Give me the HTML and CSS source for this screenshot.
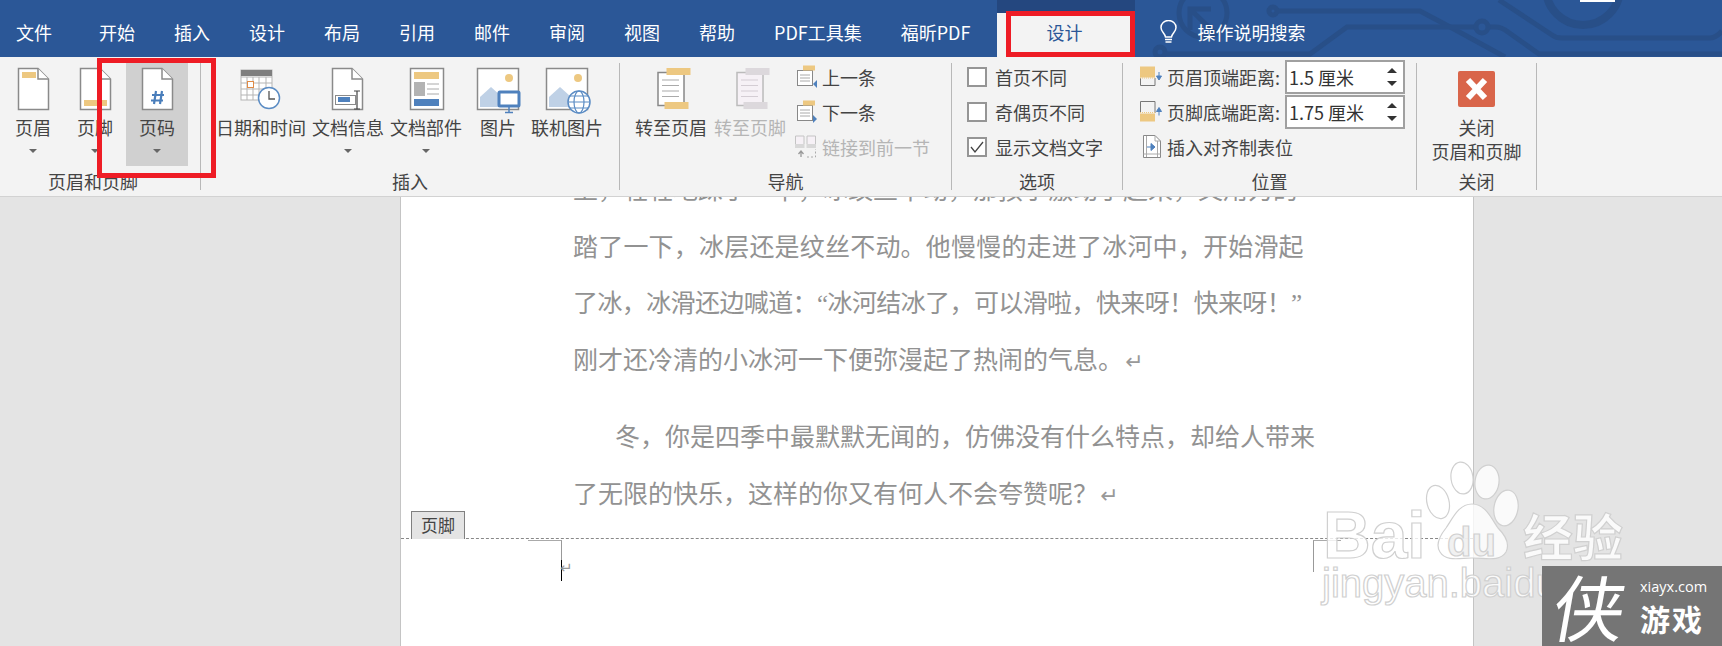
FILE: index.html
```html
<!DOCTYPE html>
<html lang="zh-CN">
  <head>
    <meta charset="UTF-8" />
    <title>页眉和页脚工具</title>
    <link rel="stylesheet" href="styles.css">
  </head>
  <body>
    <svg class="defs" width="0" height="0">
      <symbol id="doc" viewBox="0 0 48 48">
        <path d="M9.5 3.5H29L39.5 14V44.5H9.5Z" fill="#fff" stroke="#8a8a8a" stroke-width="1.5" />
        <path d="M29 3.5V14H39.5" fill="#fff" stroke="#8a8a8a" stroke-width="1.5" />
      </symbol>
    </svg>

    <!-- title tabs -->
    <div class="tabs">
      <svg class="circuit" width="1722" height="57" viewBox="0 0 1722 57">
        <g fill="none" stroke="#284f88" stroke-width="5">
          <circle cx="1203" cy="13" r="24" />
          <path d="M1190 30V9H1211M1191 10L1216 34" />
          <circle cx="1273" cy="11" r="4" />
          <path d="M1278 11H1420L1452 28L1505 57" />
          <circle cx="1160" cy="52" r="5" />
          <path d="M1165 54H1310L1347 27H1476M1488 27H1495Q1502 27 1508 32L1539 54H1722" />
          <circle cx="1482" cy="27" r="6" />
          <path d="M1499 0L1552 35Q1556 38 1562 38H1710Q1716 38 1722 31" />
          <circle cx="1583" cy="-12" r="37" stroke-width="8" />
        </g>
        <rect x="1580" y="0" width="35" height="2" fill="#fff" />
      </svg>
      <span class="tab tab-file">文件</span>
      <span class="tab">开始</span>
      <span class="tab">插入</span>
      <span class="tab">设计</span>
      <span class="tab">布局</span>
      <span class="tab">引用</span>
      <span class="tab">邮件</span>
      <span class="tab">审阅</span>
      <span class="tab">视图</span>
      <span class="tab">帮助</span>
      <span class="tab">PDF工具集</span>
      <span class="tab tab-fx">福昕PDF</span>
      <div class="tab-tool">
        <div class="tab-tool-strip"></div>
        <div class="tab-tool-name">设计</div>
      </div>
      <div class="tell-me">
        <svg width="17" height="24" viewBox="0 0 17 24">
          <path d="M5.5 17C5 13 1 12 1 7.5A7.5 7 0 0 1 16 7.5C16 12 12 13 11.5 17Z" fill="none" stroke="#fff" stroke-width="1.5" />
          <path d="M5 19.5H12M5.5 22H11.5" stroke="#fff" stroke-width="1.5" />
        </svg>
        <span>操作说明搜索</span>
      </div>
    </div>

    <!-- ribbon -->
    <div class="ribbon">
      <section class="group group-hf">
        <div class="group-body">
          <div class="btn btn-fixed">
            <svg class="icon" viewBox="0 0 48 48"><use href="#doc" /><rect x="13" y="7" width="14" height="6" fill="#edc881" /></svg>
            <span class="label">页眉</span><i class="caret"></i>
          </div>
          <div class="btn btn-fixed">
            <svg class="icon" viewBox="0 0 48 48"><use href="#doc" /><rect x="13" y="35" width="23" height="6" fill="#edc881" /></svg>
            <span class="label">页脚</span><i class="caret"></i>
          </div>
          <div class="btn btn-fixed btn-on">
            <svg class="icon" viewBox="0 0 48 48"><use href="#doc" /><path d="M23 26L21 39M29 26L27 39M19 30H31M18 35.5H30" fill="none" stroke="#4a7ebb" stroke-width="2.2" /></svg>
            <span class="label">页码</span><i class="caret"></i>
          </div>
        </div>
        <div class="group-label">页眉和页脚</div>
      </section>

      <section class="group group-insert">
        <div class="group-body">
          <div class="btn">
            <svg class="icon" viewBox="0 0 48 48">
              <rect x="4" y="5" width="31" height="30" fill="#fff" stroke="#b5b5b5" />
              <path d="M4 12H35M4 18H35M4 24H35M4 30H35M10 12V35M16 12V35M22 12V35M29 12V35" stroke="#b5b5b5" />
              <rect x="4" y="5" width="31" height="6" fill="#7f7f7f" />
              <rect x="10.5" y="16.5" width="6" height="6" fill="#fff" stroke="#e08a45" />
              <circle cx="32" cy="33" r="10.5" fill="#fff" stroke="#5b8cc4" stroke-width="1.5" />
              <path d="M32 26V34H38" fill="none" stroke="#555" stroke-width="1.3" />
            </svg>
            <span class="label">日期和时间</span>
          </div>
          <div class="btn">
            <svg class="icon" viewBox="0 0 48 48">
              <path d="M8.5 3.5H28L38.5 14V44.5H8.5Z" fill="#fff" stroke="#8a8a8a" stroke-width="1.5" />
              <path d="M28 3.5V14H38.5" fill="#fff" stroke="#8a8a8a" stroke-width="1.5" />
              <rect x="11.5" y="30.5" width="20" height="9" fill="#fff" stroke="#8a8a8a" />
              <rect x="14" y="32" width="12" height="5" fill="#4f81bd" />
              <path d="M30 26H33V44H30M36 26H33M36 44H33" fill="none" stroke="#444" stroke-width="1.2" />
            </svg>
            <span class="label">文档信息</span><i class="caret"></i>
          </div>
          <div class="btn">
            <svg class="icon" viewBox="0 0 48 48">
              <rect x="8.5" y="3.5" width="33" height="41" fill="#fff" stroke="#8a8a8a" stroke-width="1.5" />
              <rect x="12" y="7" width="25" height="7" fill="#edc881" />
              <rect x="12" y="17" width="11" height="14" fill="#b3b3b3" />
              <path d="M25 19H37M25 24H37M25 29H37" stroke="#aaa" />
              <rect x="12" y="34" width="25" height="7" fill="#4f81bd" />
            </svg>
            <span class="label">文档部件</span><i class="caret"></i>
          </div>
          <div class="btn btn-pic">
            <svg class="icon" viewBox="0 0 48 48">
              <rect x="3.5" y="3.5" width="41" height="41" fill="#fff" stroke="#8a8a8a" stroke-width="1.5" />
              <circle cx="35" cy="13" r="4" fill="#edc881" />
              <path d="M6 42V32L17 22L27 31V42Z" fill="#bfd1e6" />
              <rect x="25" y="27" width="20" height="14" rx="1" fill="#fff" stroke="#4f81bd" stroke-width="3" />
              <path d="M35 42V47M31 47.5H39" stroke="#4f81bd" stroke-width="1.5" />
            </svg>
            <span class="label">图片</span>
          </div>
          <div class="btn btn-online">
            <svg class="icon" viewBox="0 0 48 48">
              <rect x="3.5" y="3.5" width="41" height="41" fill="#fff" stroke="#8a8a8a" stroke-width="1.5" />
              <circle cx="35" cy="13" r="4" fill="#edc881" />
              <path d="M6 42V32L17 22L27 31V42Z" fill="#bfd1e6" />
              <circle cx="36" cy="37" r="11" fill="#fff" stroke="#5b8cc4" stroke-width="1.5" />
              <ellipse cx="36" cy="37" rx="5" ry="11" fill="none" stroke="#5b8cc4" stroke-width="1.2" />
              <path d="M25 37H47M27 31H45M27 43H45" stroke="#5b8cc4" stroke-width="1.2" />
            </svg>
            <span class="label">联机图片</span>
          </div>
        </div>
        <div class="group-label">插入</div>
      </section>

      <section class="group group-nav">
        <div class="group-body">
          <div class="btn">
            <svg class="icon" viewBox="0 0 48 48">
              <rect x="11" y="7.5" width="26" height="33" fill="#fff" stroke="#888" stroke-width="1.5" />
              <path d="M15 15H32M15 20.500H32M15 26H32M15 31.500H32" stroke="#aaa" stroke-width="1.2" />
              <rect x="19.500" y="3" width="24" height="7" fill="#edc881" />
              <rect x="17.500" y="37" width="24" height="7" fill="#edc881" />
            </svg>
            <span class="label">转至页眉</span>
          </div>
          <div class="btn btn-off">
            <svg class="icon" viewBox="0 0 48 48">
              <rect x="11" y="7.5" width="26" height="33" fill="#f6f1f6" stroke="#bbb" stroke-width="1.5" />
              <path d="M15 15H32M15 20.500H32M15 26H32M15 31.500H32" stroke="#d4cdd4" stroke-width="1.2" />
              <rect x="19.500" y="3" width="24" height="7" fill="#dcd8dc" />
              <rect x="17.500" y="37" width="24" height="7" fill="#dcd8dc" />
            </svg>
            <span class="label">转至页脚</span>
          </div>
          <div class="rows">
            <div class="row">
              <svg class="row-icon" viewBox="0 0 24 24">
                <rect x="2.500" y="5.500" width="15" height="15" fill="#fff" stroke="#888" />
                <path d="M5 10H15M5 13H15M5 16H15" stroke="#aaa" />
                <rect x="8" y="0.500" width="12" height="5" fill="#edc881" />
                <path d="M22 15L18 19L22 23Z" fill="#4f81bd" />
              </svg>
              <span>上一条</span>
            </div>
            <div class="row">
              <svg class="row-icon" viewBox="0 0 24 24">
                <rect x="2.500" y="5.500" width="15" height="15" fill="#fff" stroke="#888" />
                <path d="M5 10H15M5 13H15M5 16H15" stroke="#aaa" />
                <rect x="8" y="0.500" width="12" height="5" fill="#edc881" />
                <path d="M18 15L22 19L18 23Z" fill="#4f81bd" />
              </svg>
              <span>下一条</span>
            </div>
            <div class="row row-off">
              <svg class="row-icon" viewBox="0 0 24 24">
                <path d="M0.500 9V1H9V9M12 9V1H20.500V9" fill="#f6f1f6" stroke="#c4c4c4" />
                <rect x="0" y="9" width="9.500" height="4" fill="#d8d8d8" />
                <rect x="11.500" y="9" width="9.500" height="4" fill="#d8d8d8" />
                <path d="M12 22H20.500V14" fill="none" stroke="#aaa" stroke-dasharray="2 2" />
                <path d="M6 22V17M3.500 19L6 16L8.500 19" fill="none" stroke="#999" stroke-width="1.300" />
              </svg>
              <span>链接到前一节</span>
            </div>
          </div>
        </div>
        <div class="group-label">导航</div>
      </section>

      <section class="group group-options">
        <div class="rows">
          <label class="row"><i class="check"></i><span>首页不同</span></label>
          <label class="row"><i class="check"></i><span>奇偶页不同</span></label>
          <label class="row">
            <i class="check">
              <svg width="14" height="14" viewBox="0 0 14 14"><path d="M1 7L5 12L13 2" fill="none" stroke="#444" stroke-width="1.300" /></svg>
            </i>
            <span>显示文档文字</span>
          </label>
        </div>
        <div class="group-label">选项</div>
      </section>

      <section class="group group-pos">
        <div class="rows">
          <div class="row">
            <svg class="row-icon" viewBox="0 0 24 24">
              <rect x="0" y="1.500" width="15" height="11" fill="#edc881" />
              <path d="M0.500 13V20.500H15V13" fill="none" stroke="#777" />
              <path d="M0 13H15" stroke="#edc881" stroke-dasharray="1 1" />
              <path d="M19 7V13M16.500 11L19 15L21.500 11Z" fill="#4f81bd" stroke="#4f81bd" />
            </svg>
            <span class="row-name">页眉顶端距离:</span>
            <div class="spin">
              <span>1.5 厘米</span>
              <div class="spin-arrows"><i class="up"></i><i class="down"></i></div>
            </div>
          </div>
          <div class="row">
            <svg class="row-icon" viewBox="0 0 24 24">
              <path d="M0.500 13V1.500H15V13" fill="none" stroke="#777" />
              <path d="M0 12.500H15" stroke="#edc881" stroke-dasharray="1 1" />
              <rect x="0" y="13.500" width="15" height="8" fill="#edc881" />
              <path d="M19 15.500V9.500M16.500 11.500L19 7.500L21.500 11.500Z" fill="#4f81bd" stroke="#4f81bd" />
            </svg>
            <span class="row-name">页脚底端距离:</span>
            <div class="spin">
              <span>1.75 厘米</span>
              <div class="spin-arrows"><i class="up"></i><i class="down"></i></div>
            </div>
          </div>
          <div class="row">
            <svg class="row-icon" viewBox="0 0 24 24">
              <path d="M3.500 0.500H15L20.500 6V22.500H3.500Z" fill="#fff" stroke="#888" />
              <path d="M15 0.500V6H20.500M6.500 1V22M17.500 6V22M3.500 19H20.500" fill="none" stroke="#aaa" />
              <path d="M7 12H13M11 8.500L15 12L11 15.500Z" fill="#4f81bd" stroke="#4f81bd" />
            </svg>
            <span>插入对齐制表位</span>
          </div>
        </div>
        <div class="group-label">位置</div>
      </section>

      <section class="group group-close">
        <div class="group-body">
          <div class="btn">
            <svg class="icon" viewBox="0 0 48 48">
              <rect x="5" y="6" width="37" height="36" rx="2" fill="#d9654a" />
              <path d="M15 15L32 33M32 15L15 33" stroke="#fff" stroke-width="6" />
            </svg>
            <span class="label">关闭<br />页眉和页脚</span>
          </div>
        </div>
        <div class="group-label">关闭</div>
      </section>
    </div>

    <!-- document -->
    <main class="workspace">
      <div class="page">
        <div class="body-text">
          <p class="line">上，轻轻地踩了一下，冰纹丝不动，那孩子激动了起来，又用力的</p>
          <p class="line line-wide">踏了一下，冰层还是纹丝不动。他慢慢的走进了冰河中，开始滑起</p>
          <p class="line line-tight">了冰，冰滑还边喊道：“冰河结冰了，可以滑啦，快来呀！快来呀！”</p>
          <p class="line">刚才还冷清的小冰河一下便弥漫起了热闹的气息。<span class="mark">↵</span></p>
          <p class="line line-first">冬，你是四季中最默默无闻的，仿佛没有什么特点，却给人带来</p>
          <p class="line">了无限的快乐，这样的你又有何人不会夸赞呢？<span class="mark">↵</span></p>
        </div>
        <div class="footer-area">
          <span class="footer-tag">页脚</span>
          <div class="corner corner-left">
            <span class="caret-line"></span>
            <span class="mark mark-small">↵</span>
          </div>
          <div class="corner corner-right"></div>
        </div>
      </div>
    </main>

    <!-- pasted marks -->
    <div class="red-box red-box-page"></div>
    <div class="red-box red-box-tab"></div>

    <svg class="watermark" width="350" height="170" viewBox="0 0 350 170">
      <g fill="#fff" fill-opacity="0.8" stroke="#d0d0d0" stroke-width="1.2">
        <ellipse cx="138" cy="42" rx="11" ry="17" transform="rotate(-15 138 42)" />
        <ellipse cx="162" cy="18" rx="11" ry="16" transform="rotate(-8 162 18)" />
        <ellipse cx="187" cy="22" rx="12" ry="17" transform="rotate(8 187 22)" />
        <ellipse cx="206" cy="48" rx="12" ry="18" transform="rotate(10 206 48)" />
        <path d="M172 44C158 44 152 60 146 68C138 78 136 86 140 92C146 102 160 98 172 98C186 98 200 102 206 92C210 84 206 76 198 68C192 60 186 44 172 44Z" />
        <text class="wm-bold" x="23" y="98" font-size="66">Bai</text>
        <text class="wm-bold" x="147" y="96" font-size="40" fill="#eee">du</text>
        <text class="wm-cjk" x="223" y="96" font-size="50">经验</text>
        <text class="wm-thin" x="22" y="137" font-size="40">jingyan.baidu.com</text>
      </g>
    </svg>

    <div class="logo">
      <span class="logo-mark">侠</span>
      <div class="logo-text">
        <span class="logo-url">xiayx.com</span>
        <span class="logo-name">游戏</span>
      </div>
    </div>
  </body>
</html>
```

FILE: styles.css
```css
* {
  box-sizing: border-box;
}

html,
body {
  height: 100%;
}

body {
  position: relative;
  margin: 0;
  overflow: hidden;
  display: flex;
  flex-direction: column;
  background-color: #e4e4e4;
  color: #444;
  font-family: "Noto Sans CJK SC", "Noto Sans", sans-serif;
  font-size: 18px;
}

.defs {
  position: absolute;
}

i {
  font-style: normal;
}

/* Tabs */
.tabs {
  position: relative;
  display: flex;
  align-items: flex-end;
  flex: none;
  height: 57px;
  padding-left: 16px;
  background-color: #2b5797;
  color: #fff;
}

.circuit {
  position: absolute;
  left: 0;
  top: 0;
}

.tab {
  position: relative;
  height: 48px;
  margin-right: 39px;
  line-height: 46px;
  white-space: nowrap;
}

.tab-file {
  margin-right: 47px;
}

.tab-fx {
  margin-right: 27px;
}

.tab-tool {
  position: relative;
  width: 138px;
  height: 57px;
  background-color: #f3f3f3;
}

.tab-tool-strip {
  height: 13px;
  background-color: #24477f;
}

.tab-tool-name {
  height: 44px;
  padding-left: 49px;
  color: #2b5797;
  line-height: 38px;
}

.tell-me {
  position: relative;
  display: flex;
  align-items: center;
  gap: 20px;
  height: 48px;
  margin-left: 25px;
  padding-bottom: 2px;
}

/* Ribbon */
.ribbon {
  display: flex;
  flex: none;
  height: 140px;
  padding-top: 6px;
  background-color: #f3f3f3;
  border-bottom: 1px solid #d2d2d2;
}

.group {
  display: flex;
  flex-direction: column;
  height: 127px;
  border-right: 1px solid #b8b8b8;
}

.group-hf {
  width: 201px;
  padding-left: 2px;
}

.group-insert {
  width: 419px;
  padding-left: 12px;
}

.group-nav {
  width: 332px;
  padding-left: 12px;
}

.group-options {
  width: 171px;
  padding-left: 15px;
}

.group-pos {
  width: 294px;
  padding-left: 17px;
}

.group-close {
  width: 120px;
}

.group-body {
  display: flex;
  height: 103px;
}

.group-close .group-body {
  justify-content: center;
}

.group-label {
  height: 24px;
  margin-left: -17px;
  line-height: 30px;
  text-align: center;
}

.group-hf .group-label {
  margin-left: -2px;
  padding-right: 14px;
}

.group-insert .group-label,
.group-nav .group-label {
  margin-left: -12px;
}

.group-options .group-label {
  margin-left: -15px;
}

.group-close .group-label {
  margin-left: 0;
}

.btn {
  display: flex;
  flex-direction: column;
  align-items: center;
  padding: 2px 3px 0;
  white-space: nowrap;
}

.btn-fixed {
  width: 62px;
}

.btn-on {
  background-color: #d0d0d0;
}

.btn-off {
  margin-left: 1px;
  color: #b5b5b5;
}

.btn-pic {
  width: 52px;
  margin-left: 7px;
}

.btn-online {
  margin-left: 4px;
}

.icon {
  flex: none;
  width: 48px;
  height: 48px;
  overflow: visible;
}

.label {
  margin-top: 2px;
  line-height: 24px;
  text-align: center;
}

.caret {
  width: 0;
  height: 0;
  margin-top: 10px;
  border-left: 4px solid transparent;
  border-right: 4px solid transparent;
  border-top: 4px solid #666;
}

.rows {
  display: flex;
  flex-direction: column;
  margin-top: -4px;
  margin-left: 6px;
}

.group-options .rows,
.group-pos .rows {
  height: 103px;
  margin-bottom: 4px;
  margin-left: 0;
}

.row {
  display: flex;
  align-items: center;
  flex: none;
  height: 35px;
  white-space: nowrap;
}

.row-off {
  color: #b5b5b5;
}

.row-icon {
  flex: none;
  width: 24px;
  height: 24px;
  margin-right: 3px;
  overflow: visible;
}

.row-name {
  width: 118px;
}

.check {
  display: flex;
  align-items: center;
  justify-content: center;
  width: 20px;
  height: 20px;
  margin-right: 8px;
  background-color: #fff;
  border: 2px solid #959595;
}

.spin {
  display: flex;
  align-items: center;
  justify-content: space-between;
  width: 120px;
  height: 34px;
  padding: 0 6px 0 2px;
  background-color: #fff;
  border: 2px solid #a0a0a0;
  color: #333;
}

.spin-arrows {
  display: flex;
  flex-direction: column;
  gap: 8px;
}

.spin-arrows i {
  width: 0;
  height: 0;
  border-left: 5px solid transparent;
  border-right: 5px solid transparent;
}

.spin-arrows .up {
  border-bottom: 5px solid #333;
}

.spin-arrows .down {
  border-top: 5px solid #333;
}

/* Document */
.workspace {
  flex: 1;
  min-height: 0;
  padding-left: 400px;
  overflow: hidden;
}

.page {
  display: flow-root;
  width: 1074px;
  height: 100%;
  background-color: #fff;
  border-left: 1px solid #c4c4c4;
  border-right: 1px solid #c4c4c4;
}

.body-text {
  margin-top: -34px;
  padding-left: 172px;
  color: #929292;
  font-family: "Liberation Serif", "Noto Sans CJK SC", serif;
  font-size: 25px;
}

.line {
  margin: 0;
  line-height: 56.500px;
  white-space: nowrap;
}

.line-wide {
  letter-spacing: 0.200px;
}

.line-tight {
  letter-spacing: -0.600px;
}

.line-first {
  margin-top: 20px;
  text-indent: 42px;
}

.mark {
  margin-left: 2px;
  color: #999;
  font-family: "DejaVu Sans", sans-serif;
  font-size: 22px;
}

.footer-area {
  position: relative;
  display: flex;
  margin-top: 14px;
  border-top: 1px dashed #888;
}

.footer-tag {
  position: absolute;
  left: 10px;
  bottom: 100%;
  width: 54px;
  height: 28px;
  background-color: #e4e4e4;
  border: 1px solid #808080;
  border-bottom: none;
  color: #444;
  font-size: 17px;
  line-height: 26px;
  text-align: center;
}

.corner {
  position: relative;
  width: 34px;
  height: 37px;
  margin-top: 1px;
  border-top: 1px solid #aaa;
}

.corner-left {
  margin-left: 127px;
  border-right: 1px solid #999;
}

.corner-right {
  width: 28px;
  height: 32px;
  margin-left: auto;
  margin-right: 132px;
  border-left: 1px solid #999;
}

.caret-line {
  position: absolute;
  left: 33px;
  top: 19px;
  width: 1px;
  height: 21px;
  background-color: #000;
}

.mark-small {
  position: absolute;
  left: 32px;
  top: 18px;
  margin-left: 0;
  font-size: 15px;
}

/* Things pasted on the screenshot */
.red-box {
  position: absolute;
  border: 5px solid #ee1c25;
}

.red-box-page {
  left: 97px;
  top: 58px;
  width: 119px;
  height: 120px;
}

.red-box-tab {
  left: 1006px;
  top: 11px;
  width: 129px;
  height: 46px;
}

.watermark {
  position: absolute;
  left: 1300px;
  top: 460px;
}

.wm-bold {
  font-family: "Liberation Sans", sans-serif;
  font-weight: 700;
}

.wm-thin {
  font-family: "Liberation Sans", sans-serif;
}

.wm-cjk {
  font-family: "Noto Sans CJK SC", sans-serif;
  font-weight: 700;
}

.logo {
  position: absolute;
  right: 0;
  bottom: 0;
  display: flex;
  width: 180px;
  height: 80px;
  padding-left: 12px;
  background-color: #757575;
  color: #fff;
}

.logo-mark {
  width: 86px;
  font-size: 72px;
  line-height: 78px;
  transform: skewX(-10deg);
}

.logo-text {
  display: flex;
  flex-direction: column;
}

.logo-url {
  margin-top: 10px;
  font-family: "Open Sans", sans-serif;
  font-size: 14.500px;
  line-height: 22px;
}

.logo-name {
  margin-top: 2px;
  font-size: 30px;
  font-weight: 700;
  letter-spacing: 2px;
  line-height: 36px;
}
```
